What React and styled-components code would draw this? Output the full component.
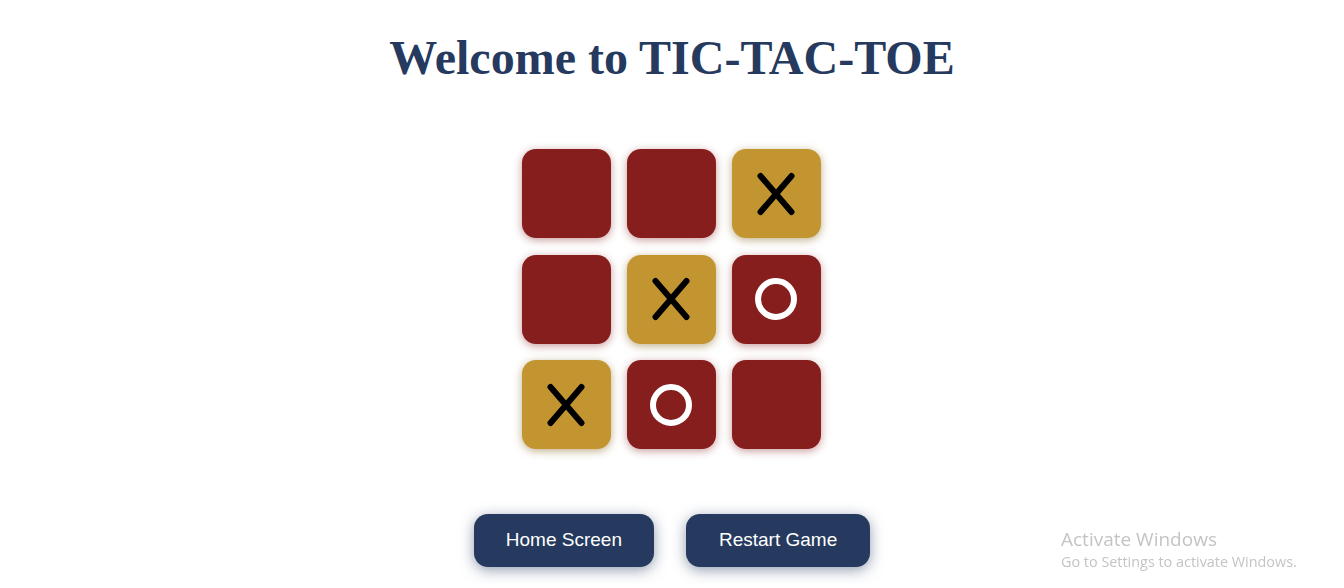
import styled, { createGlobalStyle } from 'styled-components'

const GlobalStyle = createGlobalStyle`
  body {
    margin: 0;
    background: #ffffff;
    font-family: 'Liberation Sans', Arial, sans-serif;
  }
`

const Page = styled.div`
  display: flex;
  flex-direction: column;
  align-items: center;
  height: 588px;
`

const Title = styled.h1`
  margin: 28px 0 0;
  font-family: 'Liberation Serif', 'Times New Roman', serif;
  font-size: 48px;
  line-height: 60px;
  font-weight: 700;
  color: #253a5e;
`

const Board = styled.div`
  display: grid;
  grid-template-columns: repeat(3, 89px);
  grid-auto-rows: 89px;
  gap: 16.5px 16px;
  margin: 61px 2px 0 0;
`

const Cell = styled.div`
  display: flex;
  align-items: center;
  justify-content: center;
  border-radius: 14px;
  background: ${(p) => (p.$mark === 'X' ? '#c29531' : '#861e1e')};
  box-shadow: ${(p) =>
    p.$mark === 'X'
      ? '0 2px 9px rgba(130, 95, 20, 0.5)'
      : '0 2px 9px rgba(134, 30, 30, 0.45)'};
`

const Buttons = styled.div`
  display: flex;
  gap: 32px;
  margin-top: 64.5px;
`

const Button = styled.button`
  height: 53px;
  padding: 0 ${(p) => p.$pad}px;
  border: none;
  border-radius: 14px;
  background: #253a5e;
  color: #ffffff;
  font-family: 'Liberation Sans', Arial, sans-serif;
  font-size: 19px;
  box-shadow: 0 3px 14px rgba(37, 58, 94, 0.5);
  cursor: pointer;
`

const Watermark = styled.div`
  position: fixed;
  left: 1061px;
  top: 527px;
  font-family: 'Open Sans', 'Noto Sans', sans-serif;
  color: #c4c4c4;
`

const WatermarkTitle = styled.div`
  font-size: 19px;
  line-height: 24px;
`

const WatermarkText = styled.div`
  font-size: 14.4px;
  line-height: 21px;
`

const XMark = () => (
  <svg width="40" height="44" viewBox="0 0 40 44">
    <path
      d="M4.5 4 L35.5 40 M35.5 4 L4.5 40"
      stroke="#000"
      strokeWidth="6"
      strokeLinecap="round"
      fill="none"
    />
  </svg>
)

const OMark = () => (
  <svg width="44" height="44" viewBox="0 0 44 44">
    <circle cx="22" cy="22" r="18" stroke="#fff" strokeWidth="6" fill="none" />
  </svg>
)

const board = ['', '', 'X', '', 'X', 'O', 'X', 'O', '']

const App = () => (
  <Page>
    <GlobalStyle />
    <Title>Welcome to TIC-TAC-TOE</Title>
    <Board>
      {board.map((m, i) => (
        <Cell key={i} $mark={m}>
          {m === 'X' && <XMark />}
          {m === 'O' && <OMark />}
        </Cell>
      ))}
    </Board>
    <Buttons>
      <Button $pad={32}>Home Screen</Button>
      <Button $pad={33}>Restart Game</Button>
    </Buttons>
    <Watermark>
      <WatermarkTitle>Activate Windows</WatermarkTitle>
      <WatermarkText>Go to Settings to activate Windows.</WatermarkText>
    </Watermark>
  </Page>
)

export default App
